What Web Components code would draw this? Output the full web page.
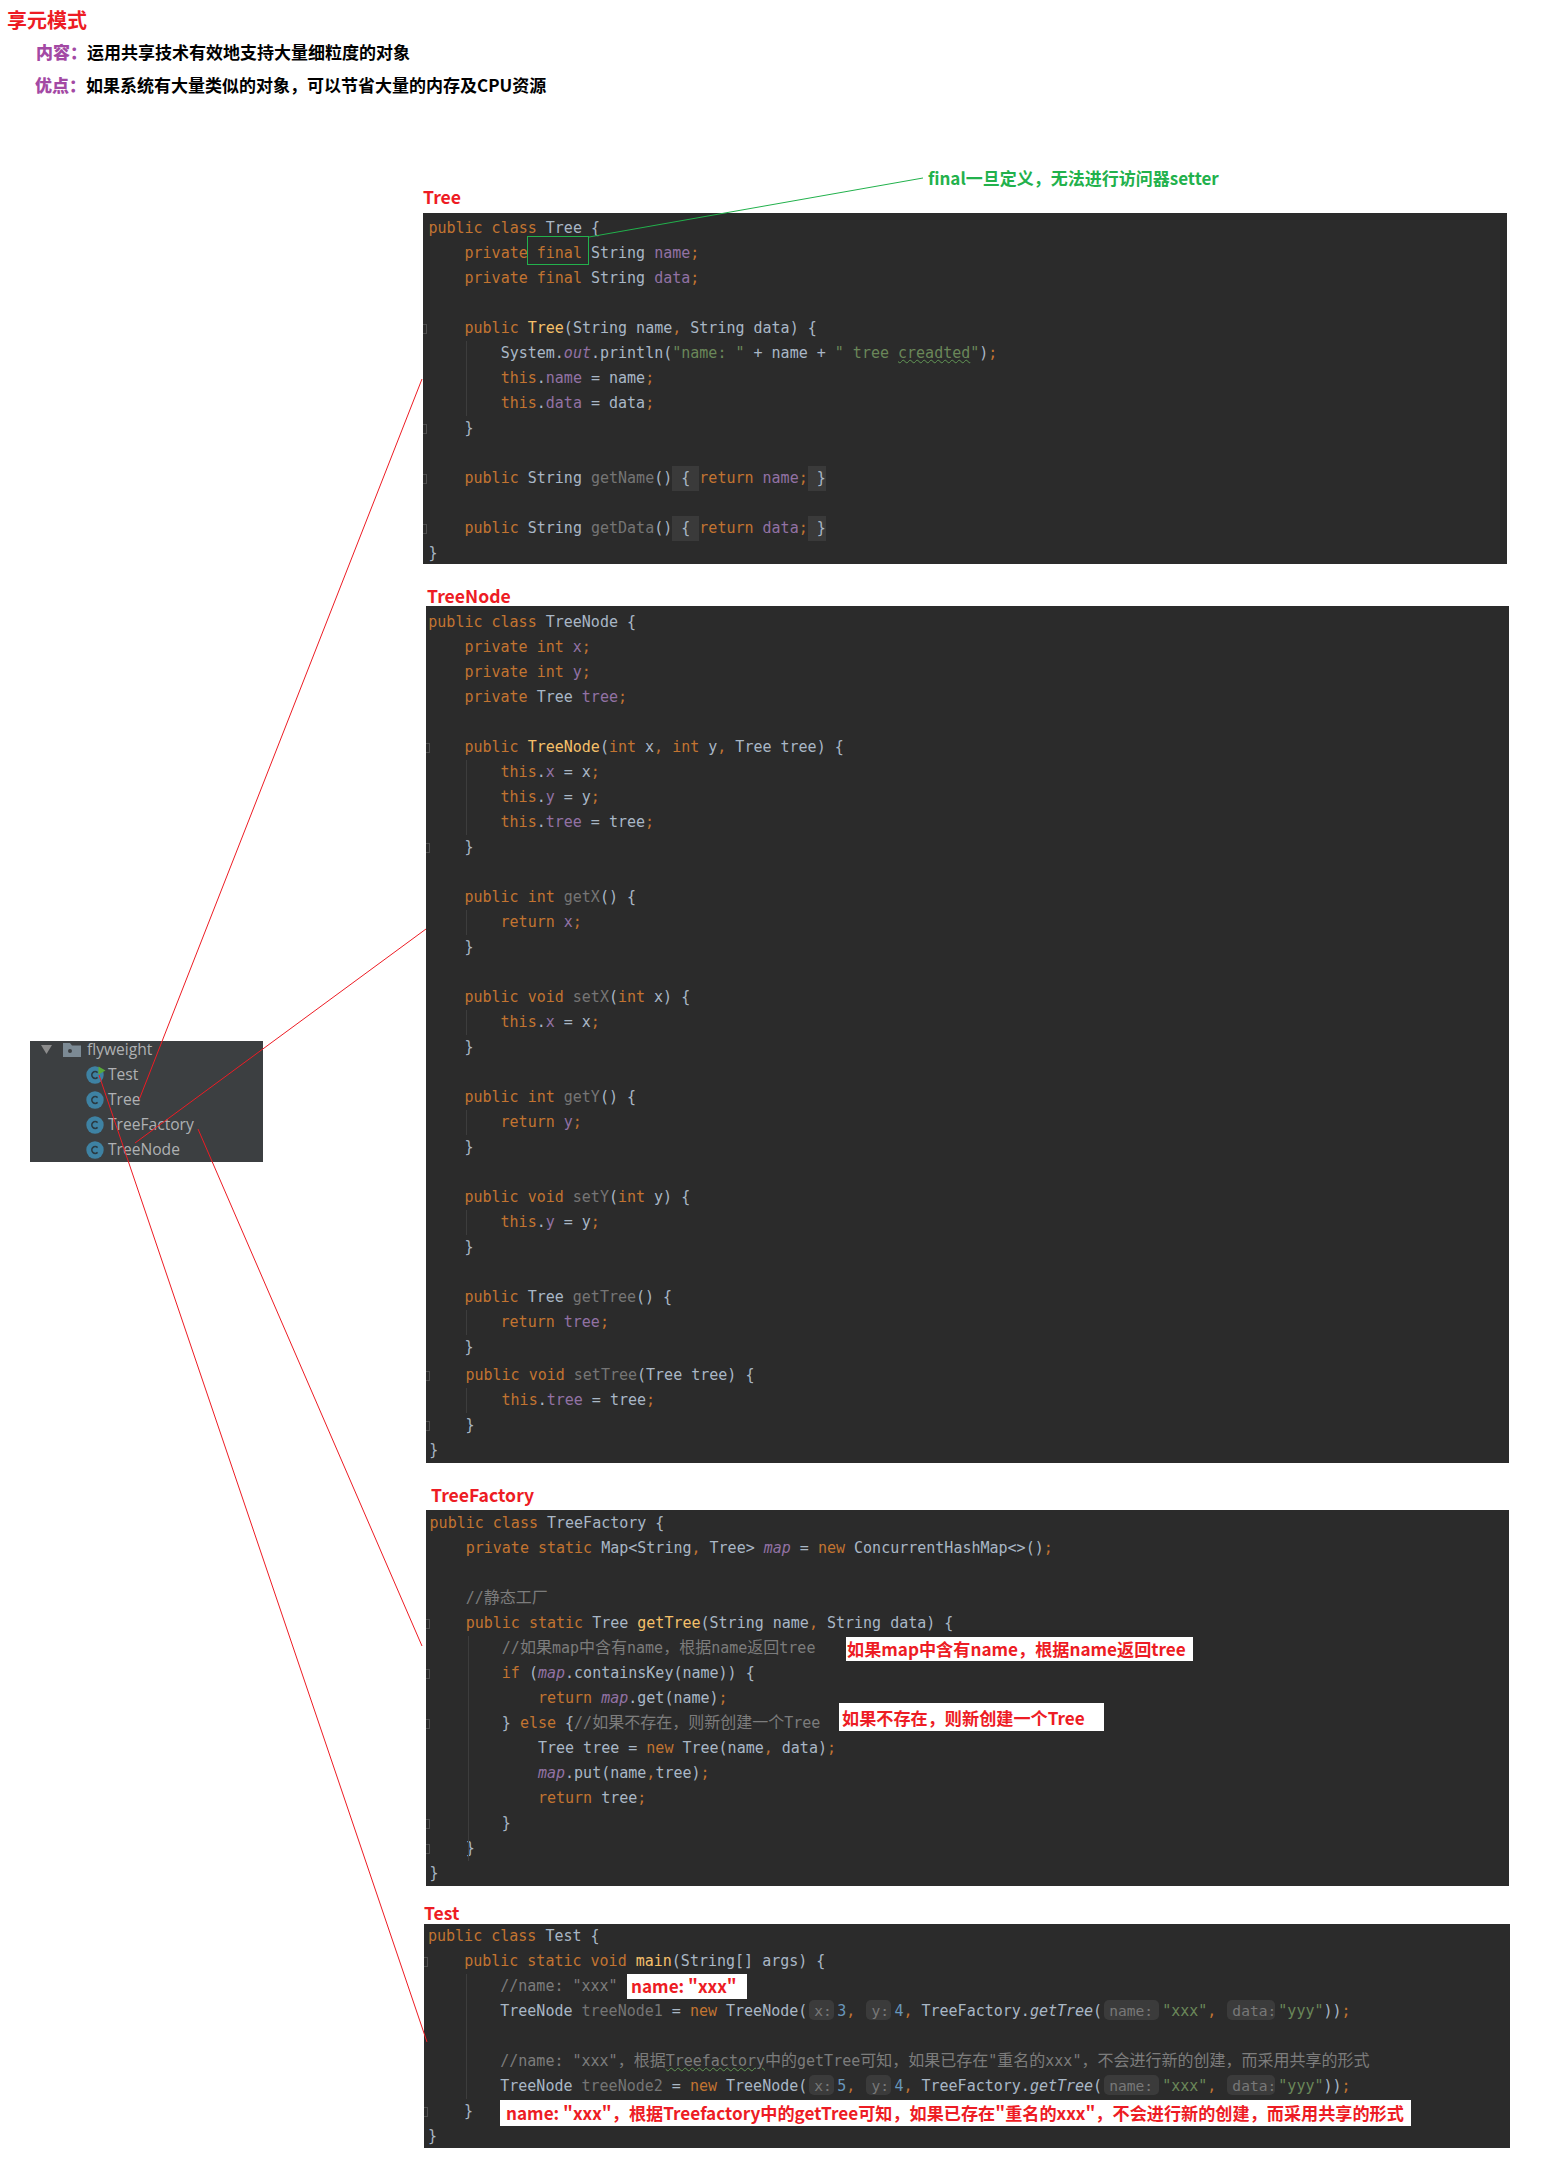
<!DOCTYPE html>
<html lang="zh">
<head>
<meta charset="utf-8">
<title>享元模式</title>
<style>
  html, body { margin: 0; background: #fff; }
</style>
</head>
<body>
<flyweight-page>
  <intro-block slot="intro"></intro-block>
  <file-tree slot="tree">
    <tree-item label="Test" run></tree-item>
    <tree-item label="Tree"></tree-item>
    <tree-item label="TreeFactory"></tree-item>
    <tree-item label="TreeNode"></tree-item>
  </file-tree>

  <code-section source="tree" heading="Tree" style="--indent:0px;--head-gap:6px;--head-left:0px;--after:22px;--pad-top:3px;--pad-left:5.4px;--panel-w:1084px;--panel-h:351px">
    <mark-box style="left:104px;top:23px;width:62px;height:29px"></mark-box>
  </code-section>
  <code-section source="treeNode" heading="TreeNode" style="--indent:3px;--head-gap:0px;--head-left:1px;--after:22px;--pad-top:4px;--pad-left:2.3px;--panel-w:1083px;--panel-h:857px"></code-section>
  <code-section source="treeFactory" heading="TreeFactory" style="--indent:3px;--head-gap:5px;--head-left:5px;--after:17px;--pad-top:1px;--pad-left:3.6px;--panel-w:1083px;--panel-h:376px">
    <note-tag style="left:420px;top:127px;width:347px;height:24px;--note-pad:1px;padding-bottom:1px">如果map中含有name，根据name返回tree</note-tag>
    <note-tag style="left:413px;top:193px;width:265px;height:28px;--note-pad:3px;padding-top:2px">如果不存在，则新创建一个Tree</note-tag>
  </code-section>
  <code-section source="test" heading="Test" style="--indent:1px;--head-gap:1px;--head-left:0px;--after:18px;--pad-top:0px;--pad-left:4px;--panel-w:1086px;--panel-h:224px">
    <note-tag style="left:203px;top:50px;width:120px;height:25px;--note-pad:4px;padding-bottom:1px">name: "xxx"</note-tag>
    <note-tag style="left:76px;top:176px;width:911px;height:26px;--note-pad:6px">name: "xxx"，根据Treefactory中的getTree可知，如果已存在"重名的xxx"，不会进行新的创建，而采用共享的形式</note-tag>
  </code-section>

  <link-lines slot="overlay"></link-lines>
</flyweight-page>

<script>
const hint = (text, width) => `<hint style="width:${width}px">${text}</hint>`;

// k keyword, f field, i static field, s string, c comment, g unused, m method, h folded brace, u typo
const SOURCES = {
  tree: {
    folds: [5, 9, 11, 13],
    guides: [[4, 6, 8]],
    lines: [
      '<k>public class</k> Tree {',
      '    <k>private final</k> String <f>name</f>;',
      '    <k>private final</k> String <f>data</f>;',
      '',
      '    <k>public</k> <m>Tree</m>(String name, String data) {',
      '        System.<i>out</i>.println(<s>"name: "</s> + name + <s>" tree <u>creadted</u>"</s>);',
      '        <k>this</k>.<f>name</f> = name;',
      '        <k>this</k>.<f>data</f> = data;',
      '    }',
      '',
      '    <k>public</k> String <g>getName</g>()<h> { </h><k>return</k> <f>name</f>;<h> }</h>',
      '',
      '    <k>public</k> String <g>getData</g>()<h> { </h><k>return</k> <f>data</f>;<h> }</h>',
      '}'
    ]
  },
  treeNode: {
    folds: [6, 10, 31, 33],
    guides: [[4, 7, 9], [4, 13, 13], [4, 17, 17], [4, 21, 21], [4, 25, 25], [4, 29, 29], [4, 32, 32]],
    pasteAt: 31,
    lines: [
      '<k>public class</k> TreeNode {',
      '    <k>private int</k> <f>x</f>;',
      '    <k>private int</k> <f>y</f>;',
      '    <k>private</k> Tree <f>tree</f>;',
      '',
      '    <k>public</k> <m>TreeNode</m>(<k>int</k> x, <k>int</k> y, Tree tree) {',
      '        <k>this</k>.<f>x</f> = x;',
      '        <k>this</k>.<f>y</f> = y;',
      '        <k>this</k>.<f>tree</f> = tree;',
      '    }',
      '',
      '    <k>public int</k> <g>getX</g>() {',
      '        <k>return</k> <f>x</f>;',
      '    }',
      '',
      '    <k>public void</k> <g>setX</g>(<k>int</k> x) {',
      '        <k>this</k>.<f>x</f> = x;',
      '    }',
      '',
      '    <k>public int</k> <g>getY</g>() {',
      '        <k>return</k> <f>y</f>;',
      '    }',
      '',
      '    <k>public void</k> <g>setY</g>(<k>int</k> y) {',
      '        <k>this</k>.<f>y</f> = y;',
      '    }',
      '',
      '    <k>public</k> Tree <g>getTree</g>() {',
      '        <k>return</k> <f>tree</f>;',
      '    }',
      '    <k>public void</k> <g>setTree</g>(Tree tree) {',
      '        <k>this</k>.<f>tree</f> = tree;',
      '    }',
      '}'
    ]
  },
  treeFactory: {
    folds: [5, 7, 9, 13, 14],
    guides: [[4, 6, 14], [8, 8, 8], [8, 10, 12]],
    lines: [
      '<k>public class</k> TreeFactory {',
      '    <k>private static</k> Map&lt;String, Tree&gt; <i>map</i> = <k>new</k> ConcurrentHashMap&lt;&gt;();',
      '',
      '    <c>//静态工厂</c>',
      '    <k>public static</k> Tree <m>getTree</m>(String name, String data) {',
      '        <c>//如果map中含有name，根据name返回tree</c>',
      '        <k>if</k> (<i>map</i>.containsKey(name)) {',
      '            <k>return</k> <i>map</i>.get(name);',
      '        } <k>else</k> {<c>//如果不存在，则新创建一个Tree</c>',
      '            Tree tree = <k>new</k> Tree(name, data);',
      '            <i>map</i>.put(name,tree);',
      '            <k>return</k> tree;',
      '        }',
      '    }',
      '}'
    ]
  },
  test: {
    folds: [2, 8],
    guides: [[4, 3, 7]],
    lines: [
      '<k>public class</k> Test {',
      '    <k>public static void</k> <m>main</m>(String[] args) {',
      '        <c>//name: "xxx"</c>',
      `        TreeNode <g>treeNode1</g> = <k>new</k> TreeNode(${hint('x:', 25)}<n>3</n>, ${hint('y:', 25)}<n>4</n>, TreeFactory.<em>getTree</em>(${hint('name:', 55)}<s>"xxx"</s>, ${hint('data:', 48)}<s>"yyy"</s>));`,
      '',
      '        <c>//name: "xxx"，根据<u>Treefactory</u>中的getTree可知，如果已存在"重名的xxx"，不会进行新的创建，而采用共享的形式</c>',
      `        TreeNode <g>treeNode2</g> = <k>new</k> TreeNode(${hint('x:', 25)}<n>5</n>, ${hint('y:', 25)}<n>4</n>, TreeFactory.<em>getTree</em>(${hint('name:', 55)}<s>"xxx"</s>, ${hint('data:', 48)}<s>"yyy"</s>));`,
      '    }',
      '}'
    ]
  }
};

function decorate(line) {
  return line
    .replace(/(?<!&[a-z]+);|,(?![^<]*<\/hint>)/g, '<k>$&</k>')
    .replace(/[\u3000-\u9fff\uff00-\uffef]+/g, '<z>$&</z>');
}

class FlyweightPage extends HTMLElement {
  constructor() {
    super();
    this.attachShadow({ mode: 'open' });
    this.shadowRoot.innerHTML = `
      <style>
        :host { display: block; position: relative; width: 1549px; height: 2166px; overflow: hidden; }
        .body { display: grid; grid-template-columns: 423px 1fr; }
        .left { padding: 854px 0 0 30px; }
        .right { display: flex; flex-direction: column; }
        .setter {
          position: absolute; left: 928px; top: 166px;
          font: 700 17px/24px "Noto Sans CJK SC", "Noto Sans", sans-serif; color: #22b14c;
        }
      </style>
      <slot name="intro"></slot>
      <div class="body">
        <div class="left"><slot name="tree"></slot></div>
        <div class="right"><slot></slot></div>
      </div>
      <div class="setter">final一旦定义，无法进行访问器setter</div>
      <slot name="overlay"></slot>
    `;
  }
}

class IntroBlock extends HTMLElement {
  constructor() {
    super();
    this.attachShadow({ mode: 'open' });
    this.shadowRoot.innerHTML = `
      <style>
        :host {
          display: flex; flex-direction: column; height: 187px; box-sizing: border-box; padding: 5px 0 0 7px;
          font-family: "Noto Sans CJK SC", "Noto Sans", sans-serif; font-weight: 700;
        }
        h1 { margin: 0; font-size: 20px; line-height: 30px; color: #ed1c24; }
        .row { display: flex; font-size: 17px; line-height: 26px; color: #000; margin-top: 4px; }
        .row + .row { margin-top: 7px; }
        .row b { color: #a349a4; width: 51px; margin-left: 29px; white-space: nowrap; }
        .row + .row b { margin-left: 28px; }
      </style>
      <h1>享元模式</h1>
      <div class="row"><b>内容：</b><span>运用共享技术有效地支持大量细粒度的对象</span></div>
      <div class="row"><b>优点：</b><span>如果系统有大量类似的对象，可以节省大量的内存及CPU资源</span></div>
    `;
  }
}

class CodeSection extends HTMLElement {
  constructor() {
    super();
    this.attachShadow({ mode: 'open' });
  }

  connectedCallback() {
    const src = SOURCES[this.getAttribute('source')];
    const rows = src.lines.map((line, i) => {
      const n = i + 1;
      const guide = src.guides.find(g => n >= g[1] && n <= g[2]);
      const classes = [];
      if (src.folds.includes(n)) classes.push('fold');
      if (src.pasteAt && n >= src.pasteAt) classes.push('pasted');
      if (src.pasteAt === n) classes.push('first-pasted');
      const style = guide ? ` style="--guide:${guide[0]}"` : '';
      const cls = guide ? classes.concat('guide') : classes;
      return `<div class="line ${cls.join(' ')}"${style}>${decorate(line) || ' '}</div>`;
    }).join('');
    this.shadowRoot.innerHTML = `
      <style>
        :host { display: block; margin: 0 0 var(--after) var(--indent); width: var(--panel-w); }
        .heading {
          height: 20px; padding-left: var(--head-left); margin-bottom: var(--head-gap);
          font: 700 17.6px/20px "Noto Sans CJK SC", "Noto Sans", sans-serif; color: #ed1c24;
        }
        .panel {
          position: relative; box-sizing: border-box; height: var(--panel-h); background: #2b2b2b; padding-top: var(--pad-top);
          font: 15px/25px "DejaVu Sans Mono", "Noto Sans CJK SC", monospace; color: #a9b7c6;
        }
        .line { position: relative; height: 25px; padding-left: var(--pad-left); white-space: pre; }
        .line.guide::after {
          content: ""; position: absolute; top: 0; bottom: 0; width: 1px; background: #3d3d3d;
          left: calc(var(--pad-left) + var(--guide) * 9px + 2px);
        }
        .line.fold::before {
          content: ""; position: absolute; left: 0; top: 8px; width: 3px; height: 8px;
          border: 1px solid #4e4e4e; border-left: 0;
        }
        .line.pasted { padding-left: calc(var(--pad-left) + 1px); }
        .line.first-pasted { margin-top: 3px; }
        k { color: #c27431; }
        f { color: #9272a4; }
        i { color: #9272a4; font-style: italic; }
        s { color: #6a8759; text-decoration: none; }
        c { color: #7c7c7c; }
        g { color: #757575; }
        m { color: #f5c06a; }
        n { color: #6897bb; }
        em { font-style: italic; }
        u { text-decoration: underline wavy #629755 1px; text-underline-offset: 1px; }
        h { background: #3a3a3a; display: inline-block; height: 25px; }
        z { font-size: 16px; line-height: 1; }
        hint {
          display: inline-block; box-sizing: border-box; height: 20px; line-height: 20px;
          padding: 1px 0 0 5px; margin: 0 3px 0 2px; border-radius: 5px;
          background: #3b3b3b; color: #787878; font-size: 14.6px; white-space: nowrap;
        }
      </style>
      <div class="heading">${this.getAttribute('heading')}</div>
      <div class="panel">${rows}<slot></slot></div>
    `;
  }
}

class NoteTag extends HTMLElement {
  constructor() {
    super();
    this.attachShadow({ mode: 'open' });
    this.shadowRoot.innerHTML = `
      <style>
        :host {
          position: absolute; display: flex; align-items: center; box-sizing: border-box; background: #fff;
          padding-left: var(--note-pad, 2px); white-space: nowrap;
          font: 700 17.15px/1 "Noto Sans CJK SC", "Noto Sans", sans-serif; color: #ed1c24;
        }
      </style>
      <slot></slot>
    `;
  }
}

class MarkBox extends HTMLElement {
  constructor() {
    super();
    this.attachShadow({ mode: 'open' });
    this.shadowRoot.innerHTML = `
      <style>
        :host { position: absolute; display: block; box-sizing: border-box; border: 1px solid #22b14c; }
      </style>
    `;
  }
}

class FileTree extends HTMLElement {
  constructor() {
    super();
    this.attachShadow({ mode: 'open' });
    this.shadowRoot.innerHTML = `
      <style>
        :host {
          display: block; width: 233px; height: 121px; background: #3c3f41; color: #afb1b3;
          font: 15.6px/25px "Open Sans", "Noto Sans", sans-serif;
        }
        .root { display: flex; align-items: center; height: 17px; line-height: 17px; margin-bottom: 4px; padding-left: 11px; }
        svg { display: block; }
        .folder { margin-left: 11px; }
        .name { margin-left: 6px; }
      </style>
      <div class="root">
        <svg width="11" height="9" viewBox="0 0 11 9"><path d="M0 0H11L5.5 9Z" fill="#8c8c8c"/></svg>
        <svg class="folder" width="18" height="14" viewBox="0 0 18 14">
          <path d="M0 0H7L9 2.5H18V14H0Z" fill="#7c8a94"/>
          <circle cx="7" cy="8" r="2" fill="#3c3f41"/>
        </svg>
        <span class="name">flyweight</span>
      </div>
      <slot></slot>
    `;
  }
}

class TreeItem extends HTMLElement {
  constructor() {
    super();
    this.attachShadow({ mode: 'open' });
  }

  connectedCallback() {
    const run = this.hasAttribute('run')
      ? '<path d="M12.5 0.5L19.5 4.5L12.5 8.5Z" fill="#59a83a"/>'
      : '';
    this.shadowRoot.innerHTML = `
      <style>
        :host { display: flex; align-items: center; height: 25px; padding-left: 56px; }
        svg { display: block; overflow: visible; }
        span { margin-left: 4px; }
      </style>
      <svg width="18" height="18" viewBox="0 0 18 18">
        <circle cx="9" cy="9" r="8.7" fill="#3e82a3"/>
        <path d="M11.6 6.6A3.4 3.4 0 1 0 11.6 11.4" fill="none" stroke="#2b3a42" stroke-width="1.5"/>
        ${run}
      </svg>
      <span>${this.getAttribute('label')}</span>
    `;
  }
}

class LinkLines extends HTMLElement {
  constructor() {
    super();
    this.attachShadow({ mode: 'open' });
    this.shadowRoot.innerHTML = `
      <style>
        :host { position: absolute; left: 0; top: 0; width: 1549px; height: 2166px; pointer-events: none; }
        svg { display: block; }
      </style>
      <svg width="1549" height="2166" fill="none">
        <g stroke="#ed1c24">
          <path d="M139 1100L422 379"/>
          <path d="M135 1143L426 929"/>
          <path d="M198 1129L422 1646"/>
          <path d="M99 1075L427 2042"/>
        </g>
        <path d="M589 237L923 178" stroke="#22b14c"/>
      </svg>
    `;
  }
}

customElements.define('flyweight-page', FlyweightPage);
customElements.define('intro-block', IntroBlock);
customElements.define('code-section', CodeSection);
customElements.define('note-tag', NoteTag);
customElements.define('mark-box', MarkBox);
customElements.define('file-tree', FileTree);
customElements.define('tree-item', TreeItem);
customElements.define('link-lines', LinkLines);
</script>
</body>
</html>
